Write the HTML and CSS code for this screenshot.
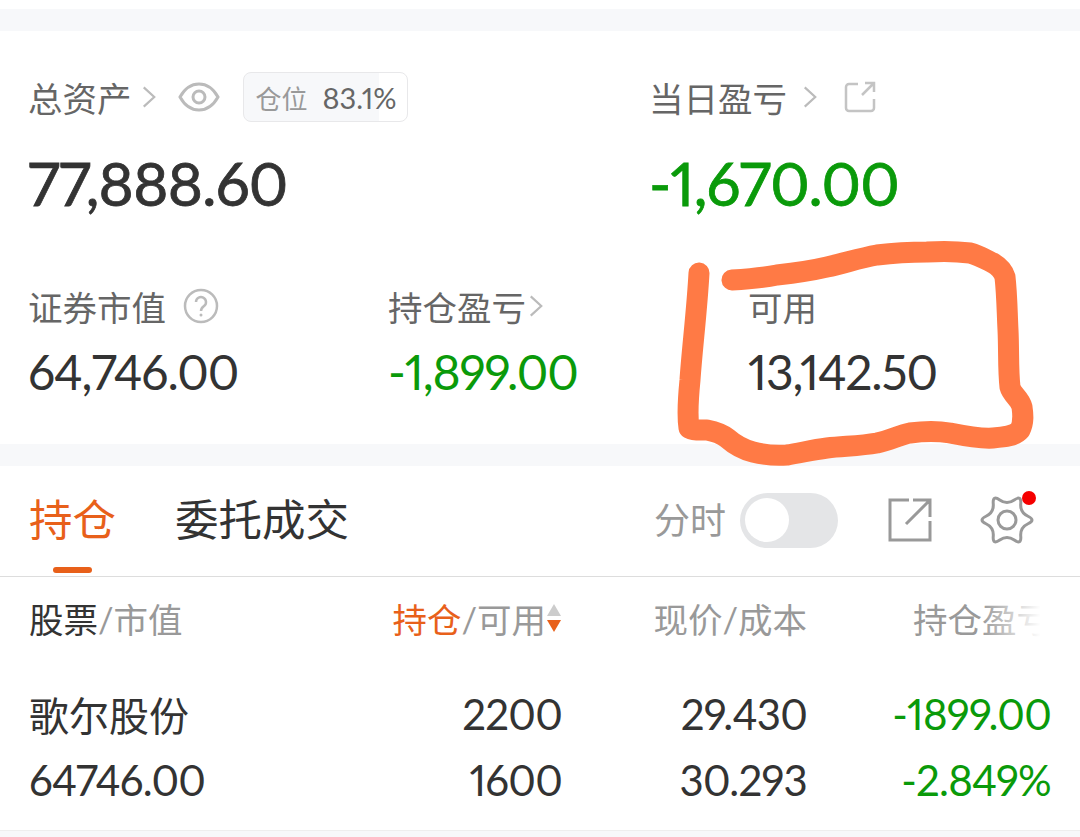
FILE: index.html
```html
<!DOCTYPE html>
<html lang="zh-CN">
<head>
    <meta charset="UTF-8">
    <meta name="viewport" content="width=device-width, initial-scale=1.0">
    <title>持仓</title>
    <link rel="stylesheet" href="styles.css">
</head>
<body>
    <div class="page">
        <div class="gap gap-top"></div>

        <!-- Account summary -->
        <section class="summary">
            <div class="summary-top">
                <div>
                    <div class="label-row">
                        <span class="label">总资产</span>
                        <svg class="chevron" viewBox="0 0 16 26"><path d="M2 2l12 11L2 24"/></svg>
                        <svg class="eye" viewBox="0 0 42 30"><path d="M2 15C7 6 14 2 21 2s14 4 19 13c-5 9-12 13-19 13S7 24 2 15z"/><circle cx="21" cy="15" r="6"/></svg>
                        <div class="badge"><span class="badge-name">仓位</span><span class="badge-num">83.1%</span></div>
                    </div>
                    <div class="big">77,888.60</div>
                </div>
                <div>
                    <div class="label-row">
                        <span class="label">当日盈亏</span>
                        <svg class="chevron chevron-wide" viewBox="0 0 16 26"><path d="M2 2l12 11L2 24"/></svg>
                        <svg class="share-small" viewBox="0 0 32 32"><path d="M14 3H5a3 3 0 0 0-3 3v21a3 3 0 0 0 3 3h22a3 3 0 0 0 3-3v-9M18 14L30 2M21 2h9v9"/></svg>
                    </div>
                    <div class="big green">-1,670.00</div>
                </div>
            </div>
            <div class="summary-bottom">
                <div>
                    <div class="label-row">
                        <span class="label">证券市值</span>
                        <svg class="help" viewBox="0 0 36 36"><circle cx="18" cy="18" r="16"/><path d="M13 14a5 5 0 1 1 8 4c-2 1.500-3 2.500-3 5"/><circle class="help-dot" cx="18" cy="27" r="1.500"/></svg>
                    </div>
                    <div class="mid">64,746.00</div>
                </div>
                <div>
                    <div class="label-row">
                        <span class="label">持仓盈亏</span>
                        <svg class="chevron chevron-tight" viewBox="0 0 16 26"><path d="M2 2l12 11L2 24"/></svg>
                    </div>
                    <div class="mid green">-1,899.00</div>
                </div>
                <div>
                    <div class="label-row">
                        <span class="label">可用</span>
                    </div>
                    <div class="mid">13,142.50</div>
                </div>
            </div>
        </section>

        <div class="gap"></div>

        <!-- Tabs -->
        <nav class="tabs">
            <div class="tab tab-active">持仓</div>
            <div class="tab">委托成交</div>
            <div class="tab-tools">
                <span class="tool-label">分时</span>
                <div class="toggle"><div class="knob"></div></div>
                <svg class="share" viewBox="0 0 44 44"><path d="M21 2H2v40h40V23M18 26L42 2M25 2h17v17"/></svg>
                <div class="gear-wrap">
                    <svg class="gear" viewBox="-27 -27 54 54"><path d="M21 3.750Q29 0 21-3.750Q13-7.500 13.750-16.300Q14.500-25.100 7.250-20.050Q0-15-7.250-20.050Q-14.500-25.100-13.750-16.300Q-13-7.500-21-3.750Q-29 0-21 3.750Q-13 7.500-13.750 16.300Q-14.500 25.100-7.250 20.050Q0 15 7.250 20.050Q14.500 25.100 13.750 16.300Q13 7.500 21 3.750z"/><circle cx="0" cy="0" r="9"/></svg>
                    <span class="red-dot"></span>
                </div>
            </div>
        </nav>

        <!-- Positions table -->
        <div class="table-head">
            <div><span class="dark">股票</span><span class="grey">/市值</span></div>
            <div class="num head-sort">
                <span class="orange">持仓</span><span class="grey">/可用</span>
                <svg class="sort" viewBox="0 0 16 32"><path class="sort-up" d="M8 2l7 12H1z"/><path class="sort-down" d="M8 30L1 18h14z"/></svg>
            </div>
            <div class="num"><span class="grey">现价/成本</span></div>
            <div class="num fade"><span class="grey">持仓盈亏</span></div>
        </div>
        <div class="table-row">
            <div class="cell-name">歌尔股份</div>
            <div class="num">2200</div>
            <div class="num">29.430</div>
            <div class="num green">-1899.00</div>
            <div>64746.00</div>
            <div class="num">1600</div>
            <div class="num">30.293</div>
            <div class="num green">-2.849%</div>
        </div>
        <div class="gap-bottom"></div>

        <!-- Hand-drawn marker on top of the screenshot -->
        <svg class="marker" viewBox="0 0 1080 837"><path d="M699 273C697 310 692 350 690 380C688 400 687 415 689 428C695 431 700 430 707 430C717 432 722 434 727 438C735 445 745 450 753 452C765 455 775 456 787 455C800 453 812 450 827 448C845 446 860 446 877 443C890 440 900 435 910 433C925 431 938 431 950 433C965 436 980 439 993 438C1005 437 1015 436 1020 430C1024 422 1023 414 1022 407C1020 398 1012 395 1010 387C1008 370 1009 350 1008 330C1007 310 1007 295 1005 277C1003 270 998 266 993 263C985 259 978 255 970 253C955 251 942 251 927 252C910 252 893 253 877 255C860 258 845 263 827 267C810 271 795 273 777 275C762 278 748 279 732 280"/></svg>
    </div>
</body>
</html>
```

FILE: styles.css
```css
* {
    box-sizing: border-box;
}
body {
    margin: 0;
    background-color: #ffffff;
    font-family: Lato, "Noto Sans CJK SC", sans-serif;
    font-feature-settings: "pnum";
    color: #333333;
}
.page {
    position: relative;
    width: 1080px;
    height: 837px;
    overflow: hidden;
    padding-top: 9px;
}
.gap {
    height: 22px;
    background-color: #f7f8fa;
}
.gap-bottom {
    height: 8px;
    background-color: #f7f8fa;
    border-top: 1px solid #eeeeee;
}
.green {
    color: #0a9a0a;
}

/* Summary */
.summary {
    height: 413px;
    padding: 40px 0 0 28px;
}
.summary-top {
    display: grid;
    grid-template-columns: 621px 1fr;
    height: 209px;
}
.summary-bottom {
    display: grid;
    grid-template-columns: 360px 360px 1fr;
}
.label-row {
    display: flex;
    align-items: center;
    height: 52px;
}
.label {
    font-size: 34.500px;
    color: #666666;
}
.chevron {
    width: 14px;
    height: 24px;
    margin-left: 10px;
    fill: none;
    stroke: #bbbbbb;
    stroke-width: 2.500;
}
.chevron-tight {
    margin-left: 3px;
}
.chevron-wide {
    margin-left: 16px;
}
.eye {
    width: 42px;
    height: 30px;
    margin-left: 22px;
    fill: none;
    stroke: #bbbbbb;
    stroke-width: 3;
}
.badge {
    display: flex;
    align-items: center;
    width: 165px;
    height: 50px;
    margin-left: 23px;
    padding-left: 12px;
    border: 1px solid #e8e8ea;
    border-radius: 8px;
    background: linear-gradient(90deg, #f7f8fa 83.100%, #ffffff 83.100%);
}
.badge-name {
    font-size: 26px;
    color: #999999;
}
.badge-num {
    margin-left: 15px;
    font-size: 29px;
    color: #666666;
}
.share-small {
    width: 32px;
    height: 32px;
    margin-left: 27px;
    fill: none;
    stroke: #c4c4c4;
    stroke-width: 2.500;
}
.help {
    width: 36px;
    height: 36px;
    margin-left: 17px;
    fill: none;
    stroke: #bbbbbb;
    stroke-width: 2.500;
}
.help-dot {
    fill: #bbbbbb;
    stroke: none;
}
.big {
    margin-top: 27px;
    font-size: 60px;
    line-height: 66px;
    letter-spacing: -0.700px;
    -webkit-text-stroke: 0.800px currentColor;
}
.mid {
    margin-top: 13px;
    font-size: 48px;
    line-height: 54px;
    letter-spacing: -1.100px;
}

/* Tabs */
.tabs {
    display: flex;
    align-items: center;
    height: 111px;
    padding: 0 46px 8px 29px;
    border-bottom: 1px solid #dddddd;
}
.tab {
    position: relative;
    margin-right: 59px;
    font-size: 43.500px;
    color: #333333;
}
.tab-active {
    color: #e8601a;
}
.tab-active::after {
    content: "";
    position: absolute;
    left: 24px;
    bottom: -24px;
    width: 39px;
    height: 6px;
    border-radius: 3px;
    background-color: #e8601a;
}
.tab-tools {
    display: flex;
    align-items: center;
    margin-left: auto;
    padding-top: 6px;
}
.tool-label {
    margin-top: -4px;
    font-size: 36px;
    color: #999999;
}
.toggle {
    width: 98px;
    height: 55px;
    margin-left: 14px;
    padding: 5px;
    border-radius: 28px;
    background-color: #e4e5e7;
}
.knob {
    width: 44px;
    height: 44px;
    border-radius: 50%;
    background-color: #ffffff;
}
.share {
    width: 44px;
    height: 44px;
    margin-left: 50px;
    fill: none;
    stroke: #999999;
    stroke-width: 3;
}
.gear-wrap {
    position: relative;
    width: 54px;
    height: 54px;
    margin-left: 48px;
}
.gear {
    width: 54px;
    height: 54px;
    fill: none;
    stroke: #999999;
    stroke-width: 3;
}
.red-dot {
    position: absolute;
    top: -2px;
    right: -2px;
    width: 14px;
    height: 14px;
    border-radius: 50%;
    background-color: #f50000;
}

/* Table */
.table-head,
.table-row {
    display: grid;
    grid-template-columns: 300px 233px 245px 244px;
    padding-left: 29px;
}
.table-head {
    height: 88px;
    padding-bottom: 6px;
    align-items: center;
    font-size: 34.500px;
}
.table-row {
    height: 165px;
    padding-top: 16px;
    grid-auto-rows: 66px;
    align-items: center;
    font-size: 42px;
    letter-spacing: -0.800px;
}
.cell-name {
    font-size: 40px;
    letter-spacing: 0;
}
.num {
    text-align: right;
}
.dark {
    color: #333333;
}
.grey {
    color: #999999;
}
.orange {
    color: #e8601a;
}
.head-sort {
    display: flex;
    justify-content: flex-end;
    align-items: center;
}
.sort {
    width: 16px;
    height: 32px;
}
.sort-up {
    fill: #cccccc;
}
.sort-down {
    fill: #e8601a;
}
.fade {
    position: relative;
}
.fade::after {
    content: "";
    position: absolute;
    top: 0;
    right: 0;
    width: 70px;
    height: 100%;
    background: linear-gradient(90deg, rgba(255, 255, 255, 0), #ffffff 85%);
}

/* Marker stroke drawn over the page */
.marker {
    position: absolute;
    top: 0;
    left: 0;
    width: 1080px;
    height: 837px;
    fill: none;
    stroke: #ff7a45;
    stroke-width: 21;
    stroke-linecap: round;
    stroke-linejoin: round;
}
```
